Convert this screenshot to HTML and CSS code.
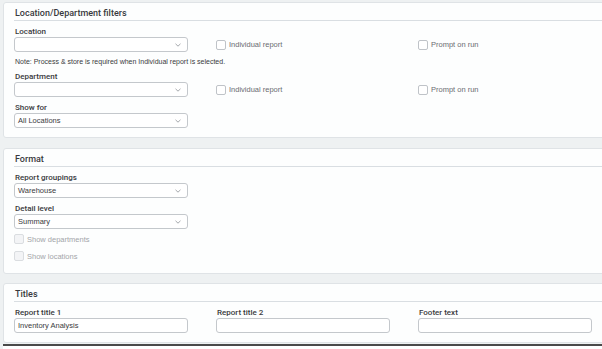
FILE: index.html
```html
<!DOCTYPE html>
<html lang="en">

<head>
  <meta charset="UTF-8">
  <meta name="viewport" content="width=device-width, initial-scale=1.0">
  <title>Report settings</title>
  <link rel="stylesheet" href="styles.css">
</head>

<body>
  <div class="page">
    <section class="panel">
      <h2 class="panel-title">Location/Department filters</h2>

      <div class="row">
        <div class="field">
          <label class="field-label">Location</label>
          <div class="select">
            <span class="select-value"></span>
            <svg class="chevron" viewBox="0 0 6 4"><polyline points="0.5,0.8 3,3.2 5.5,0.8"/></svg>
          </div>
        </div>
        <label class="check"><span class="box"></span>Individual report</label>
        <label class="check"><span class="box"></span>Prompt on run</label>
      </div>

      <p class="note">Note: Process &amp; store is required when Individual report is selected.</p>

      <div class="row row-dept">
        <div class="field">
          <label class="field-label">Department</label>
          <div class="select">
            <span class="select-value"></span>
            <svg class="chevron" viewBox="0 0 6 4"><polyline points="0.5,0.8 3,3.2 5.5,0.8"/></svg>
          </div>
        </div>
        <label class="check"><span class="box"></span>Individual report</label>
        <label class="check"><span class="box"></span>Prompt on run</label>
      </div>

      <div class="row">
        <div class="field">
          <label class="field-label">Show for</label>
          <div class="select">
            <span class="select-value">All Locations</span>
            <svg class="chevron" viewBox="0 0 6 4"><polyline points="0.5,0.8 3,3.2 5.5,0.8"/></svg>
          </div>
        </div>
      </div>
    </section>

    <section class="panel panel-format">
      <h2 class="panel-title">Format</h2>

      <div class="row">
        <div class="field">
          <label class="field-label">Report groupings</label>
          <div class="select">
            <span class="select-value">Warehouse</span>
            <svg class="chevron" viewBox="0 0 6 4"><polyline points="0.5,0.8 3,3.2 5.5,0.8"/></svg>
          </div>
        </div>
      </div>

      <div class="row">
        <div class="field">
          <label class="field-label">Detail level</label>
          <div class="select">
            <span class="select-value">Summary</span>
            <svg class="chevron" viewBox="0 0 6 4"><polyline points="0.5,0.8 3,3.2 5.5,0.8"/></svg>
          </div>
        </div>
      </div>

      <label class="check check-disabled check-first"><span class="box"></span>Show departments</label>
      <label class="check check-disabled check-second"><span class="box"></span>Show locations</label>
    </section>

    <section class="panel panel-titles">
      <h2 class="panel-title">Titles</h2>

      <div class="row">
        <div class="field">
          <label class="field-label">Report title 1</label>
          <div class="input">Inventory Analysis</div>
        </div>
        <div class="field">
          <label class="field-label">Report title 2</label>
          <div class="input"></div>
        </div>
        <div class="field">
          <label class="field-label">Footer text</label>
          <div class="input"></div>
        </div>
      </div>
    </section>

    <div class="window-edge"></div>
  </div>
</body>

</html>
```

FILE: styles.css
```css
* {
  margin: 0;
  padding: 0;
  box-sizing: border-box;
}

body {
  background: #eef1f2;
  font-family: 'Liberation Sans', Arial, sans-serif;
  color: #393a3d;
  overflow: hidden;
}

.page {
  padding: 2px 0 0 3px;
}

.panel {
  margin-right: -30px;
  margin-bottom: 10px;
  padding: 0 0 9px 10px;
  background: #fdfefe;
  border: 1px solid #dfe3e6;
  border-radius: 3px;
}

.panel-format {
  padding-bottom: 12px;
  margin-bottom: 9px;
}

.panel-titles {
  padding-bottom: 9px;
  margin-bottom: 1px;
}

.panel-title {
  padding: 5px 0 1px 1px;
  font-family: Roboto, 'Liberation Sans', sans-serif;
  font-size: 9px;
  line-height: 11px;
  font-weight: 500;
  color: #393a3d;
  border-bottom: 1px solid #d9dee2;
}

.row {
  display: grid;
  grid-template-columns: 174px 174px 174px;
  column-gap: 28px;
  margin-top: 6px;
  align-items: end;
}

.row-dept {
  margin-top: 6px;
}

.panel .row + .row {
  margin-top: 6px;
}

.field {
  display: flex;
  flex-direction: column;
}

.field-label {
  font-family: Roboto, 'Liberation Sans', sans-serif;
  font-size: 8px;
  line-height: 10px;
  font-weight: 500;
  color: #393a3d;
  padding-left: 1px;
}

.select,
.input {
  display: flex;
  align-items: center;
  height: 15px;
  padding: 0 6px 0 3px;
  background: #fff;
  border: 1px solid #c4c8cc;
  border-radius: 3px;
  font-size: 7.5px;
  color: #393a3d;
}

.select-value {
  flex: 1;
}

.chevron {
  width: 6px;
  height: 4px;
  fill: none;
  stroke: #8d9096;
  stroke-width: 0.8;
}

.check {
  display: flex;
  align-items: center;
  gap: 3px;
  height: 15px;
  font-size: 7.5px;
  color: #6b6c72;
}

.box {
  display: inline-block;
  width: 10px;
  height: 10px;
  background: #fff;
  border: 1px solid #bfc3c8;
  border-radius: 2px;
}

.note {
  margin-top: 5px;
  font-size: 7px;
  line-height: 9px;
  color: #393a3d;
  padding-left: 1px;
}

.check-disabled {
  height: 10px;
  color: #a3a5a9;
}

.check-disabled .box {
  background: #f3f4f6;
  border-color: #dadde0;
}

.check-first {
  margin-top: 5px;
}

.check-second {
  margin-top: 7px;
}

.window-edge {
  height: 12px;
  background: #fff;
  border-top: 2px solid #4a4a4a;
}
```
